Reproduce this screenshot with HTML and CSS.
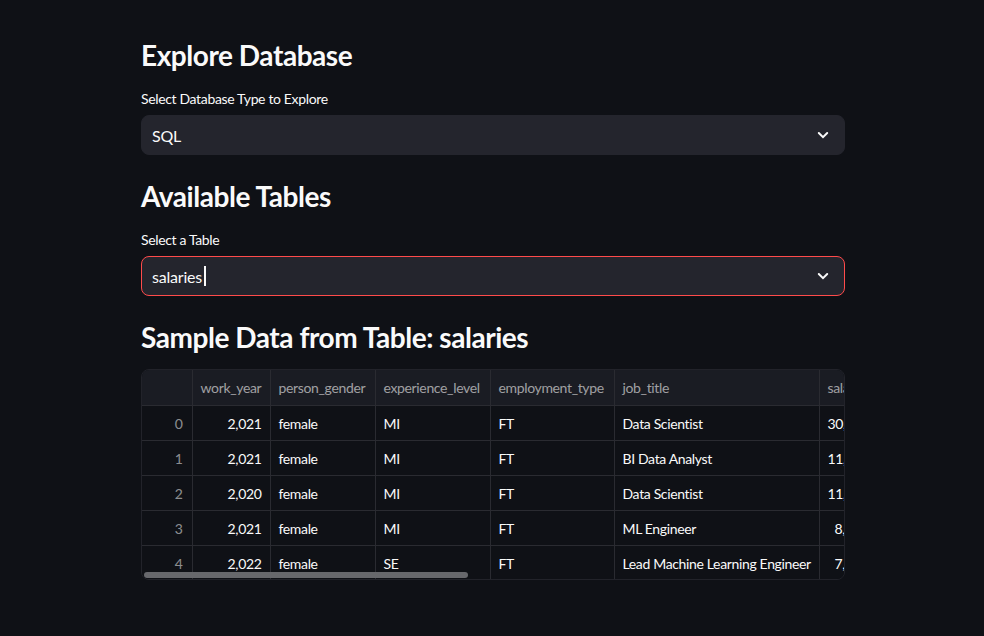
FILE: index.html
```html
<!DOCTYPE html>
<html lang="en">
<head>
<meta charset="utf-8">
<title>Explore Database</title>
<link rel="stylesheet" href="styles.css">
</head>
<body>
<main class="main">
  <h3 class="heading">Explore Database</h3>
  <div class="field">
    <label class="label">Select Database Type to Explore</label>
    <div class="select">
      <span class="select-value">SQL</span>
      <svg class="chevron" width="16" height="16" viewBox="0 0 16 16"><path d="M3.8 6 L8 10.2 L12.2 6" fill="none" stroke="#fafafa" stroke-width="2" stroke-linecap="round" stroke-linejoin="miter"/></svg>
    </div>
  </div>

  <h3 class="heading">Available Tables</h3>
  <div class="field">
    <label class="label">Select a Table</label>
    <div class="select select-focus">
      <span class="select-value">salaries<span class="caret"></span></span>
      <svg class="chevron" width="16" height="16" viewBox="0 0 16 16"><path d="M3.8 6 L8 10.2 L12.2 6" fill="none" stroke="#fafafa" stroke-width="2" stroke-linecap="round" stroke-linejoin="miter"/></svg>
    </div>
  </div>

  <h3 class="heading">Sample Data from Table: salaries</h3>
  <div class="frame">
    <table class="grid">
      <colgroup>
        <col class="c-idx"><col class="c-year"><col class="c-gender"><col class="c-exp"><col class="c-emp"><col class="c-job"><col class="c-sal"><col class="c-cur">
      </colgroup>
      <thead>
        <tr><th></th><th>work_year</th><th>person_gender</th><th>experience_level</th><th>employment_type</th><th>job_title</th><th>salary</th><th>salary_currency</th></tr>
      </thead>
      <tbody>
        <tr><td class="idx">0</td><td class="num">2,021</td><td>female</td><td>MI</td><td>FT</td><td>Data Scientist</td><td class="num">30,400,000</td><td>CLP</td></tr>
        <tr><td class="idx">1</td><td class="num">2,021</td><td>female</td><td>MI</td><td>FT</td><td>BI Data Analyst</td><td class="num">11,000,000</td><td>HUF</td></tr>
        <tr><td class="idx">2</td><td class="num">2,020</td><td>female</td><td>MI</td><td>FT</td><td>Data Scientist</td><td class="num">11,000,000</td><td>HUF</td></tr>
        <tr><td class="idx">3</td><td class="num">2,021</td><td>female</td><td>MI</td><td>FT</td><td>ML Engineer</td><td class="num">8,500,000</td><td>JPY</td></tr>
        <tr><td class="idx">4</td><td class="num">2,022</td><td>female</td><td>SE</td><td>FT</td><td>Lead Machine Learning Engineer</td><td class="num">7,500,000</td><td>INR</td></tr>
      </tbody>
    </table>
    <div class="scrollbar"></div>
  </div>
</main>
</body>
</html>
```
FILE: styles.css
```css
html, body {
  margin: 0;
  padding: 0;
  background: #0f1116;
  color: #fafafa;
  font-family: "Source Sans Pro", Lato, "Noto Sans", sans-serif;
}

.main {
  width: 704px;
  margin: 0 0 0 141px;
  padding: 38px 0 40px;
}

.heading {
  margin: 0;
  font-size: 28px;
  line-height: 34px;
  font-weight: 700;
  letter-spacing: -0.45px;
  color: #fafafa;
}

.field {
  margin-top: 18px;
  margin-bottom: 24px;
}

.label {
  display: block;
  font-size: 14px;
  line-height: 18px;
  height: 18px;
  margin-bottom: 7px;
  letter-spacing: -0.35px;
  color: #fafafa;
}

.select {
  height: 40px;
  box-sizing: border-box;
  border: 1px solid #24252d;
  background: #24252d;
  border-radius: 8px;
  display: flex;
  align-items: center;
  justify-content: space-between;
  padding: 0 13px 0 10px;
}

.select-focus {
  border-color: #ff4b4b;
}

.select-value {
  font-size: 16px;
  letter-spacing: -0.2px;
  color: #fafafa;
  display: flex;
  align-items: center;
}

.caret {
  display: inline-block;
  width: 2px;
  height: 20px;
  background: #fafafa;
  margin-left: 2px;
}

.chevron {
  display: block;
}

.frame {
  margin-top: 15px;
  position: relative;
  height: 211px;
  box-sizing: border-box;
  border: 1px solid #22232a;
  border-radius: 8px;
  overflow: hidden;
}

.grid {
  border-collapse: collapse;
  table-layout: fixed;
  width: 897px;
  font-size: 14px;
  letter-spacing: -0.35px;
}

.c-idx { width: 50px; }
.c-year { width: 78px; }
.c-gender { width: 105px; }
.c-exp { width: 115px; }
.c-emp { width: 124px; }
.c-job { width: 205px; }
.c-sal { width: 84px; }
.c-cur { width: 136px; }

.grid th, .grid td {
  border-right: 1px solid #2a2b31;
  border-bottom: 1px solid #2a2b31;
  padding: 0 8px;
  white-space: nowrap;
  overflow: hidden;
  text-align: left;
}

.grid th {
  height: 35px;
  background: #1a1c23;
  color: rgba(250, 250, 250, 0.6);
  font-weight: 400;
}

.grid td {
  height: 34px;
  color: #fafafa;
  background: #0f1116;
}

.grid td.idx {
  text-align: right;
  color: rgba(250, 250, 250, 0.55);
  padding-right: 9px;
}

.grid td.num {
  text-align: right;
}

.scrollbar {
  position: absolute;
  left: 2px;
  bottom: 1px;
  width: 324px;
  height: 6px;
  border-radius: 3px;
  background: #67686c;
}
```
